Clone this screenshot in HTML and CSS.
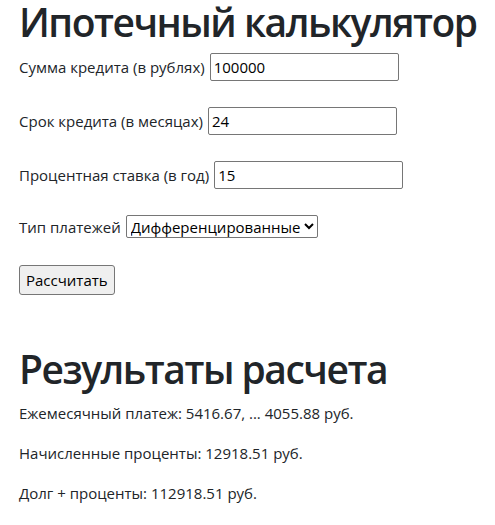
FILE: index.html
```html
<!DOCTYPE html>
<html lang="ru">
<head>
<meta charset="utf-8">
<title>Ипотечный калькулятор</title>
<link rel="stylesheet" href="styles.css">
</head>
<body>
<div class="page">
  <h1 class="title">Ипотечный калькулятор</h1>
  <form class="calc">
    <div class="row"><label for="sum">Сумма кредита (в рублях)</label><input id="sum" class="field" type="text" value="100000"></div>
    <div class="row"><label for="term">Срок кредита (в месяцах)</label><input id="term" class="field" type="text" value="24"></div>
    <div class="row"><label for="rate">Процентная ставка (в год)</label><input id="rate" class="field" type="text" value="15"></div>
    <div class="row"><label for="type">Тип платежей</label><select id="type" class="picker"><option>Дифференцированные</option><option>Аннуитетные</option></select></div>
    <div class="row"><button type="button" class="btn">Рассчитать</button></div>
  </form>
  <h1 class="title results-title">Результаты расчета</h1>
  <p class="line">Ежемесячный платеж: 5416.67, ... 4055.88 руб.</p>
  <p class="line">Начисленные проценты: 12918.51 руб.</p>
  <p class="line">Долг + проценты: 112918.51 руб.</p>
</div>
</body>
</html>
```
FILE: styles.css
```css
* { box-sizing: border-box; }
body {
  margin: 0;
  font-family: "Open Sans", "Noto Sans", sans-serif;
  font-size: 15px;
  line-height: 24px;
  color: #212529;
  background: #fff;
}
.page { padding: 0 0 0 19px; }
.title {
  margin: 0 0 9px;
  font-size: 39px;
  font-weight: 600;
  line-height: 44px;
  letter-spacing: -1.5px;
  white-space: nowrap;
}
.calc { display: flex; flex-direction: column; gap: 26px; }
.row { display: flex; align-items: baseline; gap: 5px; }
.field, .picker, .btn {
  font: inherit;
  color: #000;
}
.field {
  width: 189px;
  height: 28px;
  border: 1px solid #767676;
  border-radius: 2px;
  padding: 1px 3px;
}
.picker {
  height: 23px;
  border: 1px solid #767676;
  border-radius: 2px;
  padding: 0;
  background: #fff;
}
.btn {
  height: 30px;
  padding: 0 6px;
  border: 1px solid #767676;
  border-radius: 3px;
  background: #efefef;
}
.results-title { margin-top: 52px; margin-bottom: 10px; }
.line { margin: 0 0 16px; }
```
